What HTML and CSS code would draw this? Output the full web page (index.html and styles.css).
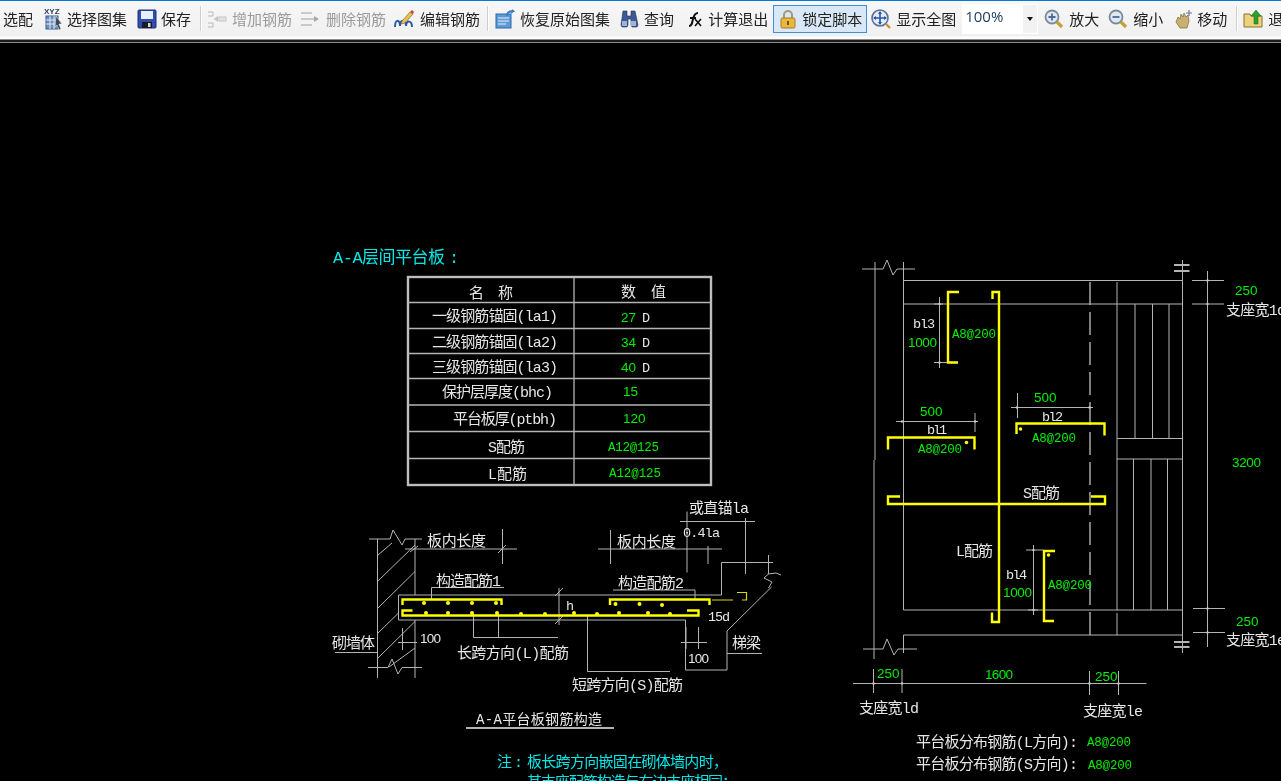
FILE: index.html
```html
<!DOCTYPE html>
<html lang="zh">
<head>
<meta charset="utf-8">
<title>平台板钢筋</title>
<link rel="stylesheet" href="styles.css">
</head>
<body>
<div class="app">
<header class="toolbar">
  <span class="label first">选配</span>

  <button class="tool ml11 g3"><svg class="ico tall" viewBox="0 0 20 24"><text x="0" y="7" class="xyz">XYZ</text><rect x="2" y="9" width="12" height="13" fill="#6f8fc0" stroke="#3b5a8c"/><path d="M2 13h12M2 17h12M6 9v13M10 9v13" stroke="#dfe8f5" fill="none"/><path d="M12 9l6 8-3 0 2 5-2 1-2-5-2 2z" fill="#3d4a5c" stroke="#fff" stroke-width=".5"/></svg><span>选择图集</span></button>
  <button class="tool ml10 g4"><svg class="ico" viewBox="0 0 20 20"><rect x="1" y="1" width="18" height="18" rx="1" fill="#2f4fb0" stroke="#1c2f78"/><rect x="4" y="2" width="12" height="8" fill="#e8eefa"/><rect x="5" y="13" width="10" height="6" fill="#1a1a22"/><rect x="11" y="14" width="2.5" height="4" fill="#d8d8d8"/></svg><span>保存</span></button>
  <i class="sep ml9"></i>
  <button class="tool off ml5 g5"><svg class="ico" viewBox="0 0 20 20"><path d="M1 3h5v4H1M1 14h5v4H1M7 10h3" stroke="#b8b8b8" fill="none"/><path d="M7 10l4-3v6z" fill="#c4c4c4"/><rect x="12" y="8" width="7" height="4" fill="#e4e4e4" stroke="#c4c4c4"/></svg><span>增加钢筋</span></button>
  <button class="tool off ml8 g6"><svg class="ico" viewBox="0 0 20 20"><path d="M1 4h11M1 10h13M1 16h11" stroke="#bcbcbc" stroke-width="1.6" fill="none"/><path d="M14 7l5 3-5 3z" fill="#a8a8a8"/></svg><span>删除钢筋</span></button>
  <button class="tool ml8 g6"><svg class="ico" viewBox="0 0 20 20"><path d="M1 18c0-8 5-8 5-1M6 17c0-7 6-7 6 0M12 17c0-6 6-6 6 1" fill="none" stroke="#2a5aa8" stroke-width="2"/><path d="M8 12L16 3l3 2-8 9-4 1z" fill="#e8c050" stroke="#7a5a20" stroke-width=".6"/><path d="M16 3l3 2 1-2-2-2z" fill="#d04040"/></svg><span>编辑钢筋</span></button>
  <i class="sep ml7"></i>
  <button class="tool ml6 g5"><svg class="ico" viewBox="0 0 20 20"><rect x="1" y="5" width="15" height="14" fill="#5d9ad6" stroke="#2c6aa8"/><path d="M3 9h11M3 12h11M3 15h8" stroke="#e8f2fb" fill="none"/><path d="M12 7c0-4 3-5 6-5l-1-1M18 2l-2 2" stroke="#3a80c8" stroke-width="2" fill="none"/></svg><span>恢复原始图集</span></button>
  <button class="tool ml9 g5"><svg class="ico" viewBox="0 0 20 20"><path d="M4 2h4v5h4V2h4l3 14-1 2h-5l-1-2V10H9v6l-1 2H3l-1-2z" fill="#3d5a94" stroke="#1e2f55" stroke-width=".6"/><rect x="3" y="12" width="5" height="5" fill="#9db4da"/><rect x="12" y="12" width="5" height="5" fill="#9db4da"/></svg><span>查询</span></button>
  <button class="tool ml11 g3"><svg class="ico" viewBox="0 0 20 20"><path d="M4 17c3 0 3-3 4-7s2-6 5-6M5 9h6" fill="none" stroke="#111" stroke-width="2"/><path d="M10 10l6 7M16 10l-6 7" stroke="#111" stroke-width="1.6"/></svg><span>计算退出</span></button>
  <button class="tool lock ml5 g4"><svg class="ico" viewBox="0 0 20 20"><path d="M6 10V6a4 4 0 0 1 8 0v4" fill="none" stroke="#a89878" stroke-width="2"/><rect x="3" y="9" width="14" height="10" rx="1.5" fill="#e8b840" stroke="#a87820"/><path d="M10 12v4" stroke="#7a5010" stroke-width="2"/></svg><span>锁定脚本</span></button>
  <button class="tool ml4 g5"><svg class="ico" viewBox="0 0 20 20"><circle cx="9" cy="9" r="8" fill="#e4ecf8" stroke="#5a7098" stroke-width="1.6"/><path d="M9 3v12M3 9h12" stroke="#2a55a8" stroke-width="1.6"/><path d="M9 2l-2 3h4zM9 16l-2-3h4zM2 9l3-2v4zM16 9l-3-2v4z" fill="#2a55a8"/><path d="M15 15l4 4" stroke="#d09030" stroke-width="2.4"/></svg><span>显示全图</span></button>
  <div class="zoombox"><span class="zoomval">100%</span><span class="zoomdrop"><b class="caret"></b></span></div>
  <button class="tool ml6 g5"><svg class="ico" viewBox="0 0 20 20"><circle cx="8" cy="8" r="6.5" fill="#dfe7f0" stroke="#7a8a9a" stroke-width="1.8"/><path d="M8 4.5v7M4.5 8h7" stroke="#4a6a9a" stroke-width="1.8"/><path d="M13 13l5 5" stroke="#c8a030" stroke-width="3.2"/></svg><span>放大</span></button>
  <button class="tool ml9 g5"><svg class="ico" viewBox="0 0 20 20"><circle cx="8" cy="8" r="6.5" fill="#dfe7f0" stroke="#7a8a9a" stroke-width="1.8"/><path d="M4.5 8h7" stroke="#4a6a9a" stroke-width="1.8"/><path d="M13 13l5 5" stroke="#c8a030" stroke-width="3.2"/></svg><span>缩小</span></button>
  <button class="tool ml11 g3"><svg class="ico" viewBox="0 0 20 20"><path d="M2 13l2-5 2 2 1-5 2 3 1-4 2 4 2-2 1 6-2 7H6z" fill="#c8b070" stroke="#7a6a3a" stroke-width=".7"/><path d="M15 1v6M12 4h6" stroke="#6a7a9a" stroke-width="1.2"/></svg><span>移动</span></button>
  <i class="sep ml9"></i>
  <button class="tool ml5 g5"><svg class="ico" viewBox="0 0 20 20"><path d="M1 5h6l1 2h11v11H1z" fill="#ecd27a" stroke="#8a7030"/><path d="M11 15V7H8l5-6 5 6h-3v8z" fill="#2ca02c" stroke="#176a17" stroke-width=".5"/></svg><span>退出</span></button>
</header>

<svg class="canvas" viewBox="0 43 1281 738" xmlns="http://www.w3.org/2000/svg">
  <!-- table -->
  <g class="ln">
    <rect x="408" y="277" width="303" height="208" class="heavy"/>
    <path d="M574 277V485M408 302.5H711M408 328.5H711M408 353.5H711M408 378.5H711M408 405H711M408 431.5H711M408 458.5H711"/>
  </g>

  <!-- left section -->
  <g class="ln thin">
    <path d="M369 539H390L393 530L402 545L405 539H422"/>
    <path d="M368 667.5H388L392 659L398 674L402 667.5H422"/>
    <path d="M377.5 539V678M415 539V595M415 620V678"/>
    <path d="M377.5 555.5L392 543M377.5 581.5L415 545M377.5 608.5L415 571.5M377.5 633.5L398 613.5M377.5 658.5L415 621.5M389 667L415 648"/>
    <path d="M405 549H517M502.5 529V564M410 552L418 546M498 553L506 545"/>
    <path d="M398.5 595H721.5V562.5H773M398.5 595V620H685.5V670H727V631L771.5 587"/>
    <path d="M768.5 555V574L764 578L772 582L768.5 588M768.5 574L776 573L781 575"/>
    <path d="M431.5 587.5H504M431.5 587.5V600"/>
    <path d="M613 590H695V600"/>
    <path d="M473.5 614V637.5M498.5 614V637.5M473.5 637.5H558"/>
    <path d="M587.5 616V671.5H670"/>
    <path d="M559 588V625M555 596L563 588M555 624L563 616"/>
    <path d="M402.5 628V650M398 642.5H417M335 652.5H377.5"/>
    <path d="M598 549H722M610.5 530V564M708 546V564M687 511.5V572.5M745.5 518V574M680 521.5H755"/>
    <path d="M681 642.5H707M686 627V649M698.5 627V649M727 653.5H762"/>
  </g>
  <g class="bar">
    <path d="M402.5 605V599.5H501.5V605"/>
    <path d="M412.5 610.5H402.5V615.5H686M610 605V599.5H709.5V605M686 615.5H698.5V610.5H687"/>
    <path class="barthin" d="M712 600H733M737 592.5H746.5V600H742"/>
  </g>
  <g class="dots">
    <circle cx="424" cy="603" r="2"/><circle cx="448" cy="603" r="2"/><circle cx="472" cy="603" r="2"/><circle cx="496" cy="603" r="2"/>
    <circle cx="426" cy="613" r="2"/><circle cx="448" cy="613" r="2"/><circle cx="472" cy="613" r="2"/><circle cx="497" cy="613" r="2"/><circle cx="521" cy="614" r="2"/><circle cx="545" cy="614" r="2"/><circle cx="574" cy="613" r="2"/><circle cx="597" cy="614" r="2"/><circle cx="619" cy="613" r="2"/><circle cx="648" cy="613" r="2"/><circle cx="670" cy="614" r="2"/>
    <circle cx="615.5" cy="604" r="2"/><circle cx="639.5" cy="604" r="2"/><circle cx="662" cy="605" r="2"/>
  </g>

  <!-- right plan -->
  <g class="ln thin">
    <path d="M862 269H883L887 260L893 275L897 269H915"/>
    <path d="M863 649H883L887 639L894 655L898 649H917"/>
    <path d="M875 262V460M874 460V659"/>
    <path d="M903.5 262V610M903.5 635V653"/>
    <path d="M903.5 280.5H1182.5M903.5 304H1182.5M903.5 610H1182.5M903.5 635H1182.5"/>
    <path d="M1182.5 260V653"/>
    <path d="M1117 282V610M1117 613V635M1135 304V438.5M1152.5 304V438.5M1169 304V438.5"/>
    <path d="M1117 438.5H1182.5M1117 459H1182.5"/>
    <path d="M1133.5 459V610M1151 459V610M1167.5 459V610"/>
    <path class="dash" d="M1090 282V635"/>
    <path d="M1207.5 271V647M1192 280.5H1224M1192 304H1224M1193 608.5H1225M1193 632.5H1225"/>
    <path d="M939.5 297V368M934 304H943M934 362.5H953"/>
    <path d="M896 421.5H978M975 413V432"/>
    <path d="M1011 407.5H1093M1017.5 393V418"/>
    <path d="M1033.5 545V615M1026 550H1043M1028 610H1038"/>
    <path d="M853 683.5H1146.5M873.5 669V693M902 669V693M1089.5 671V695M1118.5 671V695"/>
  </g>
  <g class="ln wide">
    <path d="M1174 265H1189.5M1174 271H1189.5M1174 642H1189.5M1174 647H1189.5"/>
  </g>
  <g class="bar">
    <path d="M992.5 299V292H999V622H992V612.5"/>
    <path d="M900 496.5H888V504H1105V496.5H1091"/>
    <path d="M959 292H948V362.5H958"/>
    <path d="M888 449.5V437.5H974.5V449.5"/>
    <path d="M1016.5 434V423.5H1104.5V435.5"/>
    <path d="M1055 551H1044V621H1054"/>
  </g>
  <g class="dots">
    <circle cx="966.5" cy="442.5" r="1.8"/><circle cx="1020.5" cy="429" r="1.8"/><circle cx="1048.5" cy="555" r="1.8"/>
  </g>
  <g class="ticks">
    <circle cx="939.5" cy="304" r="1.2"/><circle cx="939.5" cy="362.5" r="1.2"/><circle cx="902" cy="421.5" r="1.2"/><circle cx="975" cy="421.5" r="1.2"/><circle cx="1017" cy="407.5" r="1.2"/><circle cx="1089.5" cy="407.5" r="1.2"/><circle cx="1207.5" cy="280.5" r="1.2"/><circle cx="1207.5" cy="304" r="1.2"/><circle cx="1207.5" cy="608.5" r="1.2"/><circle cx="1207.5" cy="632.5" r="1.2"/><circle cx="1033.5" cy="550" r="1.2"/><circle cx="1033.5" cy="610" r="1.2"/><circle cx="873.5" cy="683.5" r="1.2"/><circle cx="902" cy="683.5" r="1.2"/><circle cx="1089.5" cy="683.5" r="1.2"/><circle cx="1118.5" cy="683.5" r="1.2"/>
  </g>

  <!-- texts -->
  <g class="cad">
    <text class="cyan big" x="333" y="263" textLength="112">A-A层间平台板</text>
    <text class="cyan big" x="449" y="263">:</text>
    <text x="469" y="298" textLength="44" xml:space="preserve">名 称</text>
    <text x="621" y="297" textLength="45" xml:space="preserve">数 值</text>
    <text x="432" y="321" textLength="126">一级钢筋锚固(la1)</text>
    <text x="432" y="347" textLength="126">二级钢筋锚固(la2)</text>
    <text x="432" y="372" textLength="126">三级钢筋锚固(la3)</text>
    <text x="442" y="397" textLength="111">保护层厚度(bhc)</text>
    <text x="453" y="424" textLength="104">平台板厚(ptbh)</text>
    <text x="488" y="452" textLength="37">S配筋</text>
    <text x="488" y="479" textLength="39">L配筋</text>
    <g class="green fig">
      <text x="621" y="322">27</text><text x="621" y="347">34</text><text x="621" y="372">40</text><text x="623" y="396">15</text><text x="623" y="423">120</text>
    </g>
    <g class="green spec">
      <text x="608" y="451" textLength="51">A12@125</text><text x="609" y="477" textLength="52">A12@125</text>
    </g>
    <g class="num"><text x="642" y="322">D</text><text x="642" y="347">D</text><text x="642" y="372">D</text></g>

    <text x="427" y="546" textLength="59">板内长度</text>
    <text x="436" y="586" textLength="65">构造配筋1</text>
    <text x="332" y="648" textLength="43">砌墙体</text>
    <text class="fig" x="420" y="643" textLength="21">100</text>
    <text x="457" y="658" textLength="112">长跨方向(L)配筋</text>
    <text x="617" y="547" textLength="59">板内长度</text>
    <text x="618" y="588" textLength="66">构造配筋2</text>
    <text x="689" y="513" textLength="60">或直锚la</text>
    <text class="num" x="683" y="537" textLength="37">0.4la</text>
    <text class="num" x="566" y="610">h</text>
    <text class="num" x="708" y="621" textLength="22">15d</text>
    <text x="732" y="648" textLength="29">梯梁</text>
    <text class="fig" x="688" y="663" textLength="21">100</text>
    <text x="572" y="690" textLength="111">短跨方向(S)配筋</text>
    <text class="small" x="476" y="724" textLength="126">A-A平台板钢筋构造</text>
    <path class="rule" d="M466 728H614"/>
    <text class="cyan" x="497" y="767">注</text>
    <text class="cyan" x="514" y="767">:</text>
    <text class="cyan" x="527" y="767" textLength="201">板长跨方向嵌固在砌体墙内时，</text>
    <text class="cyan" x="527" y="787" textLength="210">其支座配筋构造与右边支座相同：</text>

    <text class="num" x="913" y="328" textLength="22">bl3</text>
    <text class="num" x="927" y="434" textLength="20">bl1</text>
    <text class="num" x="1042" y="421" textLength="21">bl2</text>
    <text class="num" x="1006" y="579" textLength="21">bl4</text>
    <text x="1023" y="498" textLength="37">S配筋</text>
    <text x="956" y="556" textLength="37">L配筋</text>
    <text x="1226" y="315" textLength="60">支座宽1d</text>
    <text x="1226" y="645" textLength="60">支座宽1e</text>
    <text x="859" y="713" textLength="60">支座宽ld</text>
    <text x="1083" y="716" textLength="60">支座宽le</text>
    <text x="916" y="747" textLength="162">平台板分布钢筋(L方向):</text>
    <text x="916" y="769" textLength="162">平台板分布钢筋(S方向):</text>
    <g class="green fig">
      <text x="908" y="347" textLength="29">1000</text>
      <text x="1003" y="597" textLength="29">1000</text>
      <text x="920" y="416">500</text><text x="1034" y="402">500</text>
      <text x="1235" y="295">250</text><text x="1236" y="626">250</text>
      <text x="1232" y="467" textLength="29">3200</text>
      <text x="877" y="678">250</text><text x="985" y="679" textLength="28">1600</text><text x="1095" y="681">250</text>
    </g>
    <g class="green spec">
      <text x="952" y="338" textLength="44">A8@200</text>
      <text x="918" y="453" textLength="44">A8@200</text>
      <text x="1032" y="442" textLength="44">A8@200</text>
      <text x="1048" y="589" textLength="44">A8@200</text>
      <text x="1087" y="746" textLength="44">A8@200</text>
      <text x="1088" y="769" textLength="44">A8@200</text>
    </g>
  </g>
</svg>
</div>
</body>
</html>
```

FILE: styles.css
```css
* { box-sizing: border-box; }
html, body { margin: 0; height: 100%; background: #000; overflow: hidden; }
.app { width: 1281px; height: 781px; display: flex; flex-direction: column; overflow: hidden; }

.toolbar {
  flex: 0 0 43px;
  display: flex;
  align-items: center;
  padding: 0 0 7px 3px;
  background: linear-gradient(#f7f7f7 0, #f0f0f0 35px, #fdfdfd 36px, #fdfdfd 38px, #1c1c1c 39px, #1c1c1c 41px, #8a8a8a 41px);
  border-top: 1px solid #0a78d7;
  font: 15px "Noto Sans CJK SC", sans-serif;
  color: #222;
  white-space: nowrap;
  overflow: hidden;
  filter: blur(.3px);
}
.label { flex: none; }
.tool {
  flex: none;
  display: flex;
  align-items: center;
  height: 28px;
  padding: 0;
  border: 0;
  background: none;
  font: inherit;
  color: inherit;
}
.tool.off { color: #9b9b9b; }
.ico { flex: none; width: 20px; height: 20px; }
.ico.tall { height: 24px; }
.xyz { font: bold 8px "Liberation Sans", sans-serif; fill: #33415c; }
.g3 { gap: 3px; } .g4 { gap: 4px; } .g5 { gap: 5px; } .g6 { gap: 6px; }
.ml4 { margin-left: 4px; } .ml5 { margin-left: 5px; } .ml6 { margin-left: 6px; } .ml7 { margin-left: 7px; }
.ml8 { margin-left: 8px; } .ml9 { margin-left: 9px; } .ml10 { margin-left: 10px; } .ml11 { margin-left: 11px; }
.sep { flex: none; width: 2px; height: 25px; background: #cfcfcf; border-right: 1px solid #fff; }
.lock { padding: 0 4px; border: 1px solid #3d8fd6; background: #d8e8f6; }
.zoombox {
  flex: none;
  display: flex;
  justify-content: space-between;
  width: 76px;
  height: 30px;
  margin-left: 6px;
  background: #fff;
}
.zoomval { padding: 2px 0 0 3px; font: 15px "Open Sans", sans-serif; color: #1f3a5a; }
.zoomdrop { width: 14px; margin: 1px; background: #f2f2f2; display: flex; align-items: center; justify-content: center; }
.caret { width: 0; height: 0; border: 3.5px solid transparent; border-top: 4px solid #111; border-bottom: 0; }

.canvas { flex: none; display: block; width: 1281px; height: 738px; background: #000; }
.ln { fill: none; stroke: #b4b4b4; stroke-width: 1.3; }
.ln.thin { stroke-width: 1; }
.ln.wide { stroke-width: 1.8; }
.heavy { stroke: #bdbdbd; stroke-width: 2.4; }
.dash { stroke-dasharray: 23 7; stroke-width: 1.4; }
.bar { fill: none; stroke: #ffff00; stroke-width: 2.4; }
.bar .barthin { stroke: #d8d800; stroke-width: 1.2; }
.dots { fill: #ffff00; }
.ticks { fill: #c8c8c8; }
.cad {
  font: 15px "Liberation Mono", "Noto Sans CJK SC", monospace;
  fill: #e6e6e6;
  filter: blur(.3px);
}
.cad .num { font-size: 13.5px; }
.cad .fig { font: 13.5px "Liberation Sans", sans-serif; }
.cad .spec { font: 12.5px "Liberation Mono", monospace; }
.cad .small { font-size: 14px; }
.cad .big { font-size: 17px; }
.cad .cyan { fill: #00e8e8; }
.cad .green { fill: #00ee00; }
.rule { fill: none; stroke: #b4b4b4; stroke-width: 2; }
```
